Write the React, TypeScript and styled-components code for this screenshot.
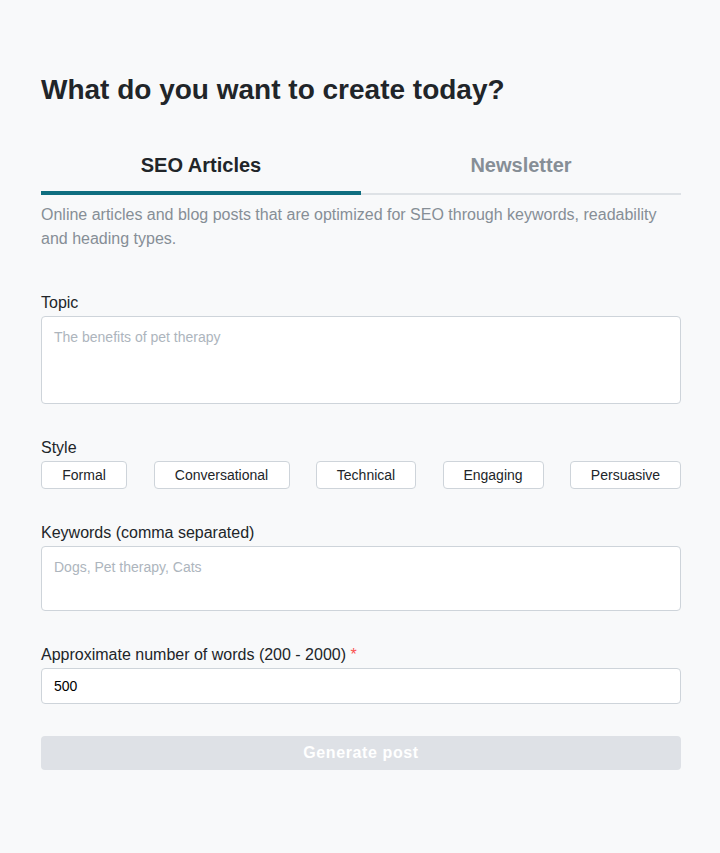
import React, { useState } from "react";
import styled, { createGlobalStyle } from "styled-components";

const Global = createGlobalStyle`
  html, body { margin: 0; padding: 0; background: #f8f9fa; }
  body { font-family: "Liberation Sans", Arial, sans-serif; color: #212529; }
  * { box-sizing: border-box; }
`;

const Page = styled.div`
  min-height: 853px;
  background: #f8f9fa;
  padding: 72px 39px 40px 41px;
`;

const Title = styled.h1`
  margin: 0;
  font-size: 28px;
  font-weight: 700;
  line-height: 36px;
  color: #212529;
`;

const Tabs = styled.div`
  display: flex;
  margin-top: 45px;
  border-bottom: 2px solid #dee2e6;
`;

const Tab = styled.button<{ $active?: boolean }>`
  flex: 1;
  background: none;
  border: none;
  padding: 0 0 14px;
  margin-bottom: -2px;
  font-family: inherit;
  font-size: 20px;
  font-weight: 700;
  line-height: 24px;
  cursor: pointer;
  color: ${(p) => (p.$active ? "#212529" : "#868e96")};
  border-bottom: 4px solid ${(p) => (p.$active ? "#0f6e80" : "transparent")};
`;

const Description = styled.p`
  margin: 8px 0 0;
  font-size: 16px;
  line-height: 24px;
  color: #868e96;
`;

const Field = styled.div<{ $mt: number }>`
  margin-top: ${(p) => p.$mt}px;
  display: flex;
  flex-direction: column;
`;

const Label = styled.label`
  font-size: 16px;
  line-height: 20px;
  color: #212529;
  margin-bottom: 3px;
`;

const Req = styled.span`
  color: #fa5252;
`;

const TextArea = styled.textarea<{ $h: number }>`
  height: ${(p) => p.$h}px;
  resize: none;
  border: 1px solid #ced4da;
  border-radius: 4px;
  background: #fff;
  padding: 11px 12px;
  font-family: inherit;
  font-size: 14px;
  line-height: 18px;
  color: #212529;
  &::placeholder { color: #adb5bd; }
  outline: none;
`;

const Input = styled.input`
  height: 36px;
  border: 1px solid #ced4da;
  border-radius: 4px;
  background: #fff;
  padding: 0 12px;
  font-family: inherit;
  font-size: 14px;
  color: #000;
  outline: none;
`;

const StyleRow = styled.div`
  display: flex;
  justify-content: space-between;
`;

const Chip = styled.button<{ $w: number }>`
  width: ${(p) => p.$w}px;
  height: 28px;
  background: #fff;
  border: 1px solid #ced4da;
  border-radius: 4px;
  font-family: inherit;
  font-size: 14px;
  color: #212529;
  padding: 0;
  cursor: pointer;
`;

const Submit = styled.button`
  margin-top: 32px;
  width: 100%;
  height: 34px;
  border: none;
  border-radius: 4px;
  background: #dee1e6;
  color: #fff;
  font-family: inherit;
  font-size: 16px;
  font-weight: 700;
  letter-spacing: 0.6px;
`;

const styles: [string, number][] = [
  ["Formal", 86],
  ["Conversational", 136],
  ["Technical", 100],
  ["Engaging", 101],
  ["Persuasive", 111],
];

export default function App() {
  const [tab, setTab] = useState(0);
  return (
    <>
      <Global />
      <Page>
        <Title>What do you want to create today?</Title>
        <Tabs>
          <Tab $active={tab === 0} onClick={() => setTab(0)}>SEO Articles</Tab>
          <Tab $active={tab === 1} onClick={() => setTab(1)}>Newsletter</Tab>
        </Tabs>
        <Description>
          Online articles and blog posts that are optimized for SEO through keywords, readability and heading types.
        </Description>
        <Field $mt={42}>
          <Label>Topic</Label>
          <TextArea $h={88} placeholder="The benefits of pet therapy" />
        </Field>
        <Field $mt={34}>
          <Label>Style</Label>
          <StyleRow>
            {styles.map(([s, w]) => (
              <Chip key={s} $w={w}>{s}</Chip>
            ))}
          </StyleRow>
        </Field>
        <Field $mt={34}>
          <Label>Keywords (comma separated)</Label>
          <TextArea $h={65} placeholder="Dogs, Pet therapy, Cats" />
        </Field>
        <Field $mt={34}>
          <Label>
            Approximate number of words (200 - 2000) <Req>*</Req>
          </Label>
          <Input defaultValue="500" />
        </Field>
        <Submit disabled>Generate post</Submit>
      </Page>
    </>
  );
}
